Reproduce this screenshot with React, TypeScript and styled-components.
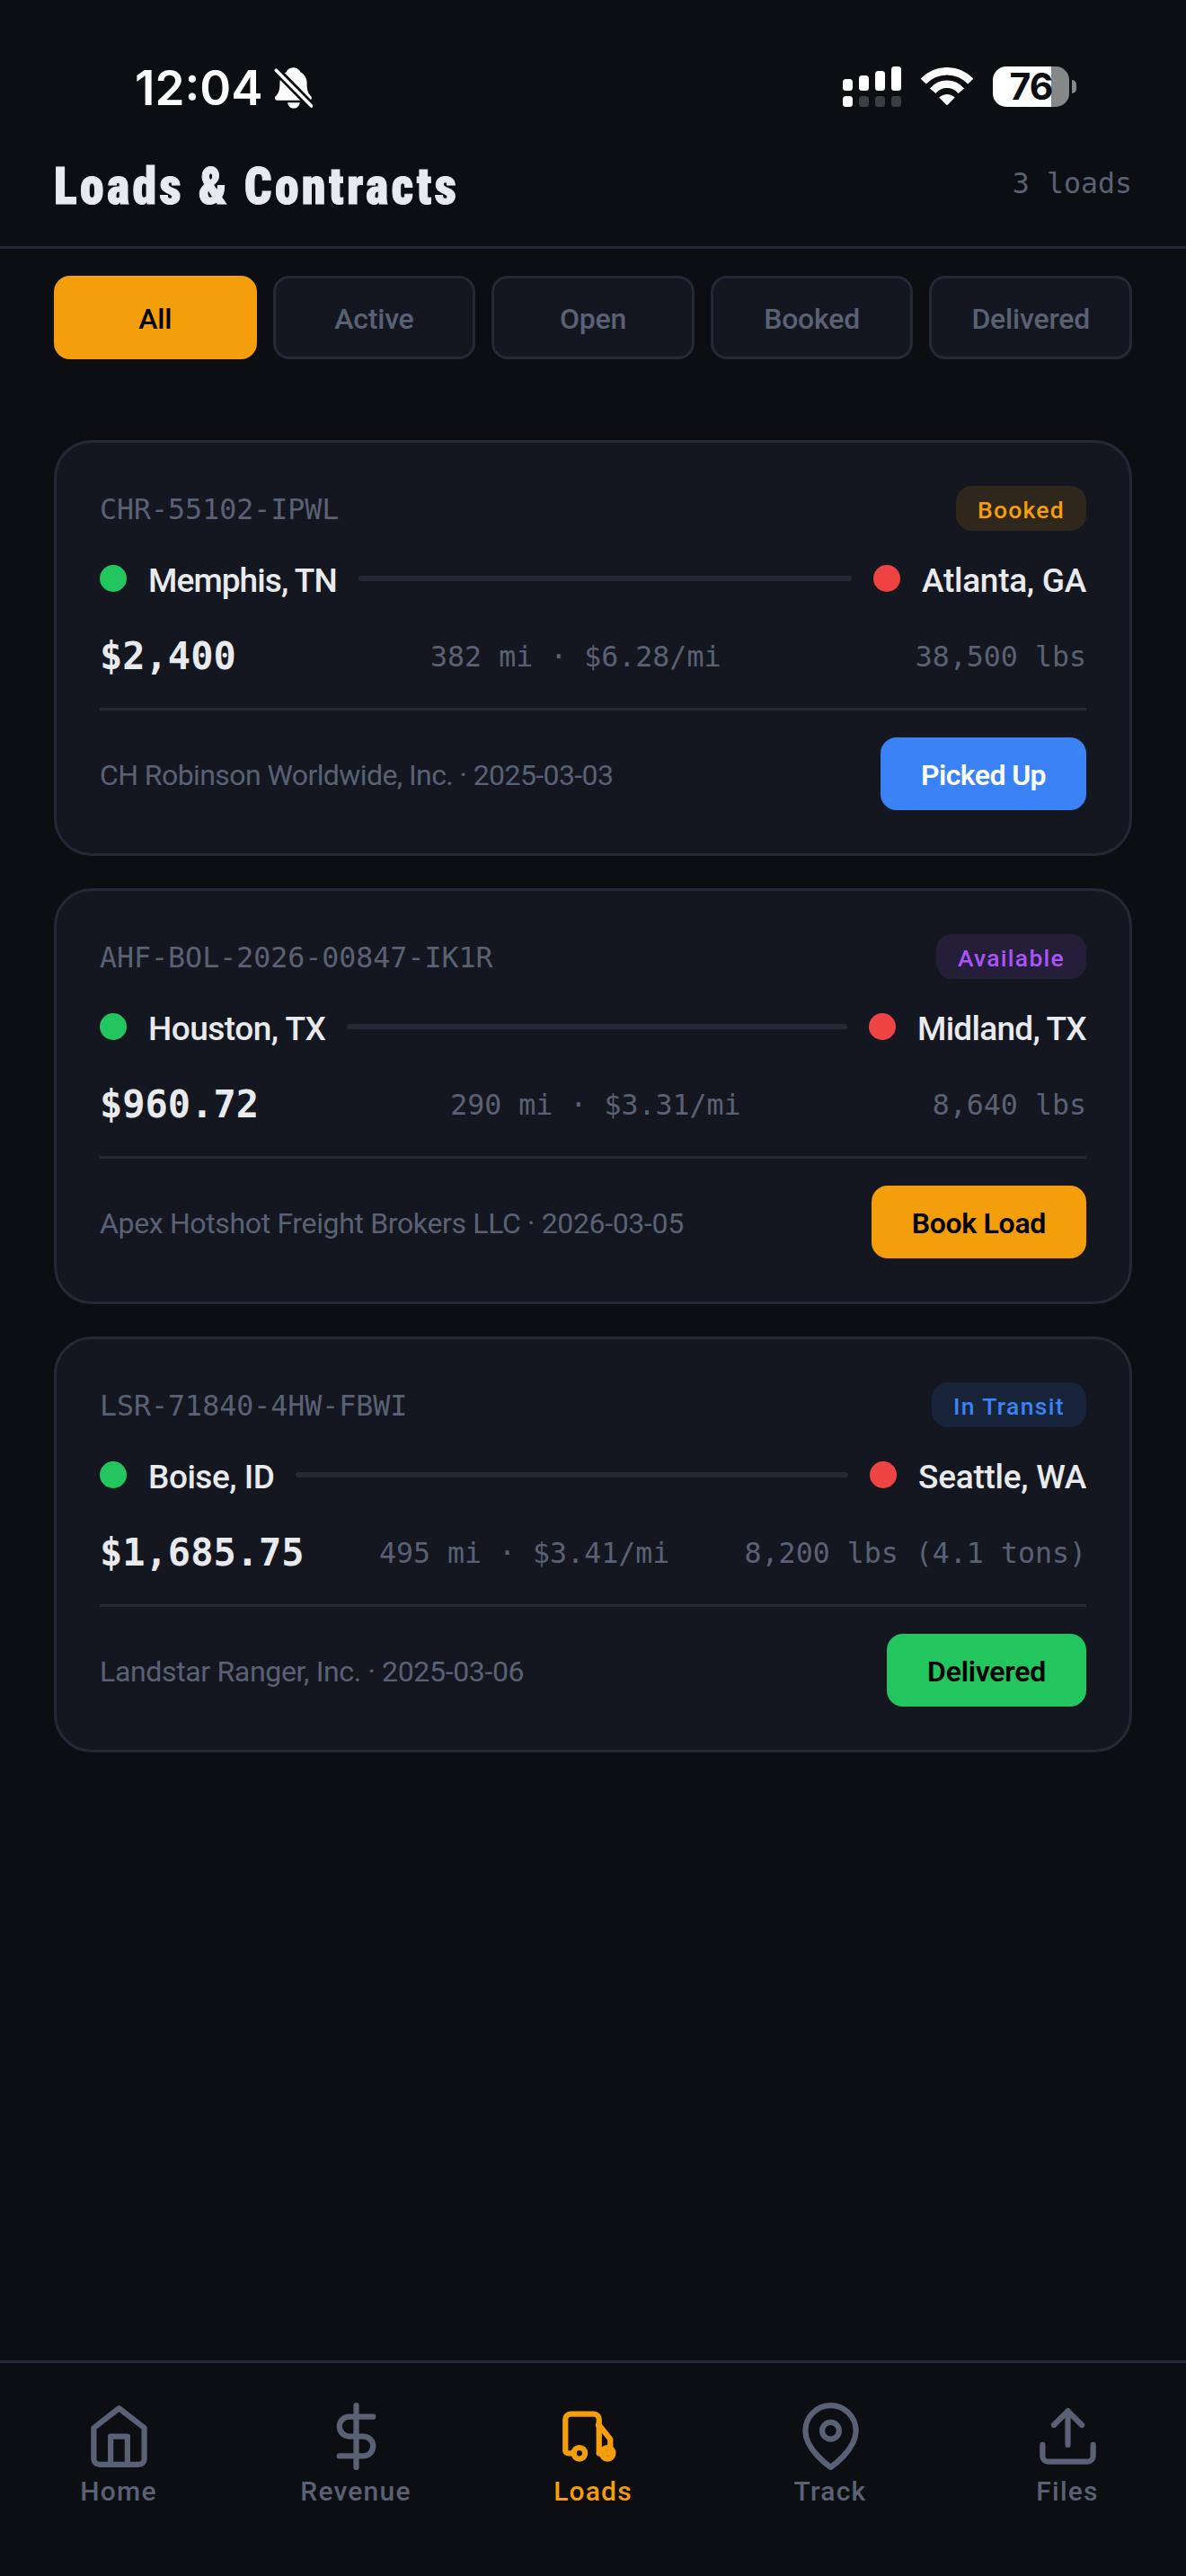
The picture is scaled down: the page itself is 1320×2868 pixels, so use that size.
import React from "react";
import styled, { createGlobalStyle } from "styled-components";

const c = {
  bg: "#0c0e12",
  surface: "#14171f",
  border: "#252935",
  text: "#e8eaed",
  muted: "#5a6175",
  amber: "#f59e0b",
  blue: "#3b82f6",
  green: "#22c55e",
  red: "#ef4444",
  purple: "#a855f7",
};
const sans = `Roboto, "Open Sans", sans-serif`;
const mono = `"DejaVu Sans Mono", "Liberation Mono", monospace`;

const GlobalStyle = createGlobalStyle`
  *, *::before, *::after { box-sizing: border-box; }
  body { margin: 0; background: ${c.bg}; color: ${c.text}; font-family: ${sans}; }
  button { font: inherit; color: inherit; border: 0; margin: 0; padding: 0; background: none; }
`;

const Screen = styled.div`
  display: flex;
  flex-direction: column;
  width: 1320px;
  height: 2868px;
  background: ${c.bg};
`;

/* Status bar */
const StatusBar = styled.div`
  display: flex;
  align-items: center;
  justify-content: space-between;
  height: 150px;
  padding: 46px 122px 0 150px;
  color: #fff;
`;
const Clock = styled.div`
  display: flex;
  align-items: center;
  gap: 12px;
  font: 600 53px/64px Inter, sans-serif;
`;
const StatusIcons = styled.div`
  display: flex;
  align-items: center;
  gap: 22px;
  margin-bottom: 3px;
`;
const Battery = styled.div`
  display: flex;
  align-items: center;
  gap: 3px;
`;
const BatteryBody = styled.div`
  width: 85px;
  height: 45px;
  border-radius: 15px;
  background: linear-gradient(90deg, #fff 65px, #868788 65px);
  color: ${c.bg};
  font: 700 41px/45px Inter, sans-serif;
  letter-spacing: -1px;
  text-align: center;
`;
const BatteryNub = styled.div`
  width: 5px;
  height: 15px;
  border-radius: 0 5px 5px 0;
  background: #868788;
`;

/* Header */
const Header = styled.header`
  display: flex;
  align-items: center;
  justify-content: space-between;
  height: 127px;
  padding: 0 60px 10px;
  border-bottom: 3px solid ${c.border};
`;
const Title = styled.h1`
  margin: 0;
  font: 900 58px/70px "Roboto Condensed", Roboto, sans-serif;
  letter-spacing: 3.5px;
  -webkit-text-stroke: 1px ${c.text};
  transform: scaleX(0.93);
  transform-origin: left;
`;
const Count = styled.span`
  margin-bottom: 6px;
  font: 400 31.6px/40px ${mono};
  color: ${c.muted};
`;

/* Filters */
const Filters = styled.nav`
  display: grid;
  grid-template-columns: repeat(5, 1fr);
  gap: 18px;
  padding: 30px 60px 0;
`;
const Filter = styled.button<{ $active?: boolean }>`
  && {
    height: 93px;
    padding-top: 3px;
    border: 3px solid ${(p) => (p.$active ? c.amber : c.border)};
    border-radius: 18px;
    background: ${(p) => (p.$active ? c.amber : c.surface)};
    color: ${(p) => (p.$active ? "#000" : c.muted)};
    font: 500 32px/38px ${sans};
    letter-spacing: -0.2px;
  }
`;

/* Cards */
const List = styled.main`
  display: flex;
  flex: 1;
  flex-direction: column;
  gap: 36px;
  padding: 90px 60px 0;
`;
const Card = styled.article`
  height: 463px;
  padding: 48px;
  border: 3px solid ${c.border};
  border-radius: 42px;
  background: ${c.surface};
`;
const CardTop = styled.div`
  display: flex;
  align-items: center;
  justify-content: space-between;
  height: 50px;
`;
const LoadId = styled.span`
  padding-top: 2px;
  font: 400 31.6px/40px ${mono};
  color: ${c.muted};
`;
const Badge = styled.span<{ $color: string; $ls: number }>`
  height: 50px;
  padding: 2px 24px 0;
  border-radius: 18px;
  background: ${(p) => p.$color}1f;
  color: ${(p) => p.$color};
  font: 500 26.5px/50px ${sans};
  letter-spacing: ${(p) => p.$ls}px;
`;
const Route = styled.div`
  display: flex;
  align-items: center;
  gap: 24px;
  height: 46px;
  margin-top: 30px;
`;
const Dot = styled.i<{ $color: string }>`
  flex: none;
  width: 30px;
  height: 30px;
  border-radius: 50%;
  background: ${(p) => p.$color};
`;
const City = styled.span<{ $ls: number }>`
  padding-top: 5px;
  font: 500 37px/44px ${sans};
  letter-spacing: ${(p) => p.$ls}px;
  white-space: nowrap;
`;
const RouteLine = styled.i`
  flex: 1;
  height: 6px;
  border-radius: 3px;
  background: ${c.border};
`;
const Figures = styled.div`
  display: flex;
  align-items: center;
  justify-content: space-between;
  height: 50px;
  margin-top: 39px;
  font-family: ${mono};
`;
const Price = styled.span`
  font-size: 42px;
  font-weight: 700;
  line-height: 50px;
`;
const Meta = styled.span`
  font-size: 31.6px;
  line-height: 40px;
  color: ${c.muted};
  white-space: nowrap;
`;
const CardBottom = styled.div`
  display: flex;
  align-items: center;
  justify-content: space-between;
  margin-top: 32px;
  padding-top: 30px;
  border-top: 3px solid ${c.border};
`;
const Broker = styled.span<{ $ls: number }>`
  padding-top: 3px;
  font: 400 32px/38px ${sans};
  letter-spacing: ${(p) => p.$ls}px;
  color: ${c.muted};
`;
const Action = styled.button<{ $bg: string; $fg: string; $ls: number }>`
  && {
    height: 81px;
    padding: 3px 45px 0;
    border-radius: 18px;
    background: ${(p) => p.$bg};
    color: ${(p) => p.$fg};
    font: 600 32px/38px ${sans};
    letter-spacing: ${(p) => p.$ls}px;
  }
`;

/* Tab bar */
const TabBar = styled.nav`
  display: grid;
  grid-template-columns: repeat(5, 1fr);
  height: 240px;
  border-top: 3px solid ${c.border};
`;
const Tab = styled.button<{ $active?: boolean }>`
  && {
    display: flex;
    flex-direction: column;
    align-items: center;
    gap: 6px;
    padding-top: 44px;
    color: ${(p) => (p.$active ? c.amber : c.muted)};
    font: 500 30px/36px ${sans};
    letter-spacing: 1.2px;
  }
`;
const TabIcon = styled.svg.attrs({ viewBox: "0 0 24 24" })`
  width: 75px;
  height: 75px;
  margin-left: 1px;
  fill: none;
  stroke: currentColor;
  stroke-width: 2;
  stroke-linecap: round;
  stroke-linejoin: round;
`;

const BellOff = () => (
  <svg width="43" height="46" viewBox="0 0 43 46">
    <path
      fill="#fff"
      d="M21.3.3c4 0 7 2.2 8 5 5 2.5 7.3 7 7.3 13 0 9 2 11 4.6 14 1.2 1.5.8 4.5-2.2 4.5H4c-3 0-3.8-3-2.4-4.6 3-3 4.8-5.5 4.8-14 0-6 2.4-10.5 7.3-13C14.7 2.5 17.3.3 21.3.3zM15 39.2h13.8c-.6 3.8-3.2 6.4-6.9 6.4s-6.3-2.6-6.9-6.4z"
    />
    <path d="M2 2.6 42 43.500" stroke={c.bg} strokeWidth="9" />
    <path d="M2.3 3.2 41.6 43" stroke="#fff" strokeWidth="3.6" strokeLinecap="round" />
  </svg>
);

const bars = [
  [0, 14],
  [18, 10],
  [36, 5],
  [54, 0],
];

const Signal = () => (
  <svg width="65" height="45" viewBox="0 0 65 45" fill="#fff">
    {bars.map(([x, y], i) => (
      <g key={x}>
        <rect x={x} y={y} width="11" height={27 - y} rx="3.5" />
        <rect x={x} y="33" width="11" height="12" rx="3.5" fill={i ? "#3d3e41" : "#fff"} />
      </g>
    ))}
  </svg>
);

const Wifi = () => (
  <svg width="58" height="43" viewBox="0 0 58 43" fill="none" stroke="#fff" strokeWidth="8.4">
    <path d="M2.7 15.6A36 36 0 0 1 55.3 15.6" />
    <path d="M13.2 26.2A20.6 20.6 0 0 1 44.8 26.2" />
    <path d="M20.3 33.6A12.5 12.5 0 0 1 37.7 33.6L30 41.6Q29 42.5 28 41.6Z" fill="#fff" stroke="none" />
  </svg>
);

const loads = [
  {
    id: "CHR-55102-IPWL",
    status: ["Booked", c.amber, 1.25],
    from: ["Memphis, TN", -0.9],
    to: ["Atlanta, GA", -0.27],
    price: "$2,400",
    rate: "382 mi · $6.28/mi",
    weight: "38,500 lbs",
    broker: ["CH Robinson Worldwide, Inc. · 2025-03-03", -0.58],
    action: ["Picked Up", c.blue, "#fff", -0.6],
  },
  {
    id: "AHF-BOL-2026-00847-IK1R",
    status: ["Available", c.purple, 1.25],
    from: ["Houston, TX", -0.5],
    to: ["Midland, TX", -0.73],
    price: "$960.72",
    rate: "290 mi · $3.31/mi",
    weight: "8,640 lbs",
    broker: ["Apex Hotshot Freight Brokers LLC · 2026-03-05", -0.35],
    action: ["Book Load", c.amber, "#000", -0.3],
  },
  {
    id: "LSR-71840-4HW-FBWI",
    status: ["In Transit", c.blue, 1.34],
    from: ["Boise, ID", -0.48],
    to: ["Seattle, WA", -0.26],
    price: "$1,685.75",
    rate: "495 mi · $3.41/mi",
    weight: "8,200 lbs (4.1 tons)",
    broker: ["Landstar Ranger, Inc. · 2025-03-06", -0.34],
    action: ["Delivered", c.green, "#000", -0.25],
  },
] as const;

const tabs = [
  {
    label: "Home",
    icon: (
      <>
        <path d="M3 9l9-7 9 7v11a2 2 0 0 1-2 2H5a2 2 0 0 1-2-2z" />
        <path d="M9 22V12h6v10" />
      </>
    ),
  },
  {
    label: "Revenue",
    icon: (
      <>
        <path d="M12 1v22" />
        <path d="M18 5H9.5a3.5 3.5 0 0 0 0 7h5a3.5 3.5 0 0 1 0 7H6" />
      </>
    ),
  },
  {
    label: "Loads",
    icon: (
      <>
        <path d="M5 18H3a1 1 0 0 1-1-1V6a2 2 0 0 1 2-2h8a2 2 0 0 1 2 2v12" />
        <path d="M13.7 8H14l4 5v5h-4" />
        <circle cx="7" cy="18" r="2" />
        <circle cx="17" cy="18" r="2" />
      </>
    ),
  },
  {
    label: "Track",
    icon: (
      <>
        <path d="M21 10c0 7-9 13-9 13s-9-6-9-13a9 9 0 0 1 18 0z" />
        <circle cx="12" cy="10" r="3" />
      </>
    ),
  },
  {
    label: "Files",
    icon: (
      <>
        <path d="M21 15v4a2 2 0 0 1-2 2H5a2 2 0 0 1-2-2v-4" />
        <path d="M17 8l-5-5-5 5" />
        <path d="M12 3v12" />
      </>
    ),
  },
];

export default function App() {
  return (
    <Screen>
      <GlobalStyle />
      <StatusBar>
        <Clock>
          12:04
          <BellOff />
        </Clock>
        <StatusIcons>
          <Signal />
          <Wifi />
          <Battery>
            <BatteryBody>76</BatteryBody>
            <BatteryNub />
          </Battery>
        </StatusIcons>
      </StatusBar>
      <Header>
        <Title>Loads &amp; Contracts</Title>
        <Count>3 loads</Count>
      </Header>
      <Filters>
        {["All", "Active", "Open", "Booked", "Delivered"].map((f, i) => (
          <Filter key={f} $active={i === 0}>
            {f}
          </Filter>
        ))}
      </Filters>
      <List>
        {loads.map((l) => (
          <Card key={l.id}>
            <CardTop>
              <LoadId>{l.id}</LoadId>
              <Badge $color={l.status[1]} $ls={l.status[2]}>
                {l.status[0]}
              </Badge>
            </CardTop>
            <Route>
              <Dot $color={c.green} />
              <City $ls={l.from[1]}>{l.from[0]}</City>
              <RouteLine />
              <Dot $color={c.red} />
              <City $ls={l.to[1]}>{l.to[0]}</City>
            </Route>
            <Figures>
              <Price>{l.price}</Price>
              <Meta>{l.rate}</Meta>
              <Meta>{l.weight}</Meta>
            </Figures>
            <CardBottom>
              <Broker $ls={l.broker[1]}>{l.broker[0]}</Broker>
              <Action $bg={l.action[1]} $fg={l.action[2]} $ls={l.action[3]}>
                {l.action[0]}
              </Action>
            </CardBottom>
          </Card>
        ))}
      </List>
      <TabBar>
        {tabs.map((tab) => (
          <Tab key={tab.label} $active={tab.label === "Loads"}>
            <TabIcon>{tab.icon}</TabIcon>
            {tab.label}
          </Tab>
        ))}
      </TabBar>
    </Screen>
  );
}
